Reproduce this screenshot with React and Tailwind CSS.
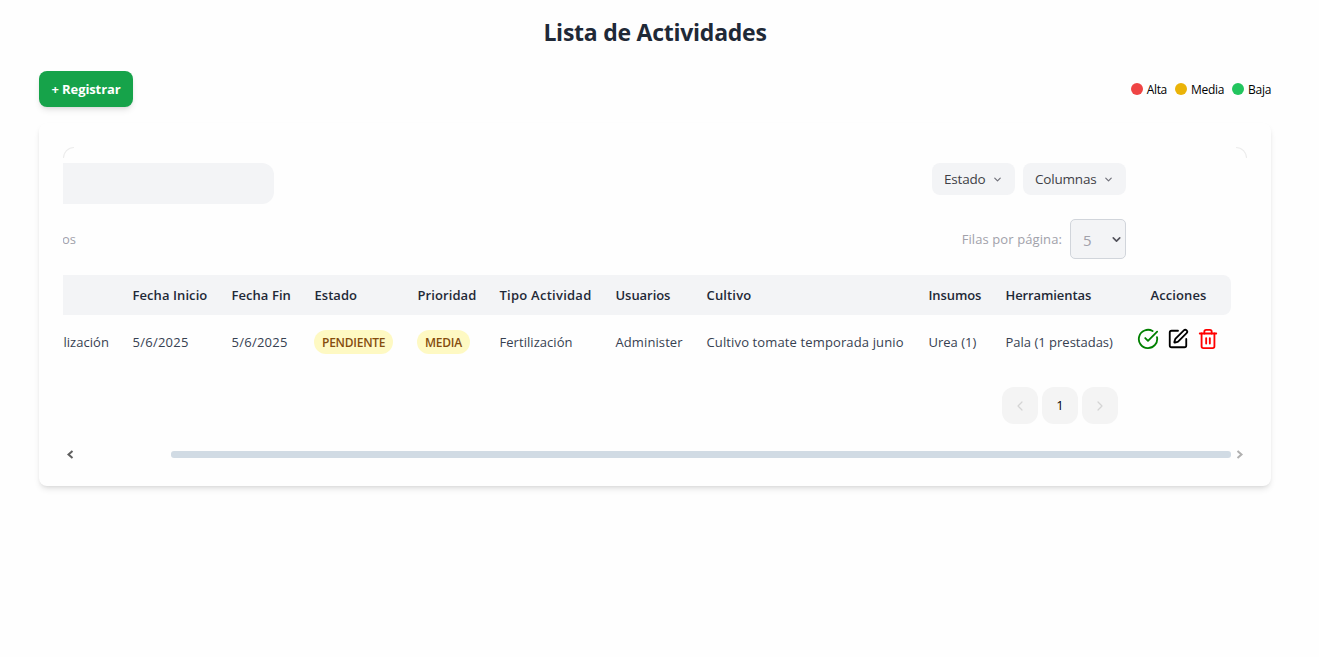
import React from "react";
import { ChevronDown, ChevronLeft, ChevronRight, CircleCheckBig, SquarePen, Trash2 } from "lucide-react";

const COLS =
  "grid grid-cols-[57px_99px_83px_103px_82px_116px_91px_222px_77px_133px_105px] items-center whitespace-nowrap";

const legend = [
  { label: "Alta", dot: "bg-[#ef4444]" },
  { label: "Media", dot: "bg-[#eab308]" },
  { label: "Baja", dot: "bg-[#22c55e]" },
];

const headers = [
  { label: "Fecha Inicio", track: "tracking-[0.08px]" },
  { label: "Fecha Fin", track: "tracking-[0.06px]" },
  { label: "Estado", track: "tracking-[0.03px]" },
  { label: "Prioridad", track: "tracking-[0.08px]" },
  { label: "Tipo Actividad", track: "tracking-[0.25px]" },
  { label: "Usuarios", track: "tracking-[-0.05px]" },
  { label: "Cultivo", track: "tracking-[0.15px]" },
  { label: "Insumos", track: "tracking-[-0.1px]" },
  { label: "Herramientas", track: "tracking-[-0.1px]" },
];

function Badge({ children }) {
  return (
    <span className="-ml-[0.5px] flex h-6 w-fit items-center rounded-full bg-[#fef9c3] px-2 pt-px text-[12px] font-semibold tracking-[-0.25px] text-[#854d0e]">
      {children}
    </span>
  );
}

function Cell({ children, className = "" }) {
  return <div className={`pl-[12.5px] ${className}`}>{children}</div>;
}

function FilterButton({ label, className }) {
  return (
    <button className={`flex h-8 items-center justify-between rounded-lg bg-[#f3f4f6] pl-3 pr-3 text-[13.5px] text-[#3f3f46] ${className}`}>
      {label}
      <ChevronDown size={11} strokeWidth={2.6} className="text-[#71717a]" />
    </button>
  );
}

export default function App() {
  return (
    <main className="flex h-[657px] w-full flex-col overflow-hidden bg-[#fefefe] pl-[39px] pr-12 font-['Open_Sans','Noto_Sans',sans-serif] text-black">
      <h1 className="mt-4 text-center text-[23px] font-bold leading-8 tracking-[-0.25px] text-[#1f2937]">
        Lista de Actividades
      </h1>

      <div className="mt-[23px] flex h-9 items-center justify-between">
        <button className="h-9 w-[94px] whitespace-nowrap rounded-lg bg-[#16a34a] pt-0.5 text-[13px] font-bold tracking-[-0.1px] text-white shadow-md">
          + Registrar
        </button>
        <div className="flex gap-2 text-[12px]">
          {legend.map((l) => (
            <div key={l.label} className="flex items-center gap-1">
              <span className={`size-3 rounded-full ${l.dot}`} />
              <span className="pt-0.5 tracking-[-0.3px]">{l.label}</span>
            </div>
          ))}
        </div>
      </div>

      <section className="mt-4 h-[363px] rounded-lg bg-[#fefefe] p-6 shadow-md">
        <div className="flex flex-col">
          <div className="flex h-4 justify-between">
            <div className="size-[11px] rounded-tl-[11px] border-l border-t border-[#ececec]" />
            <div className="size-[11px] rounded-tr-[11px] border-r border-t border-[#ececec]" />
          </div>
          <div className="flex h-10 items-start justify-between pr-[121px]">
            <div className="h-[41px] w-[211px] shrink-0 rounded-r-xl bg-[#f3f4f6]" />
            <div className="flex gap-2">
              <FilterButton label="Estado" className="w-[83px] tracking-[-0.2px]" />
              <FilterButton label="Columnas" className="w-[103px] tracking-[-0.2px]" />
            </div>
          </div>

          <div className="mt-4 flex h-10 items-center justify-between pr-[121px] text-[13px] text-[#a1a1aa]">
            <div className="flex w-[13px] justify-end overflow-hidden whitespace-nowrap pt-0.5">registrados</div>
            <div className="flex items-center gap-2">
              <span className="pt-0.5 tracking-[0.1px]">Filas por página:</span>
              <div className="flex h-10 w-14 items-center justify-between rounded-[5px] border border-[#d1d5db] bg-[#f3f4f6] pl-3 pr-0.5 text-[15px]">
                <span className="pt-0.5">5</span>
                <ChevronDown size={13} strokeWidth={3} className="text-[#52525b]" />
              </div>
            </div>
          </div>

          <div className={`${COLS} mt-4 h-10 w-[1168px] rounded-r-lg bg-[#f3f4f6] pt-0.5 text-[13px] font-semibold text-[#1f2937]`}>
            <div />
            {headers.map((h) => (
              <Cell key={h.label} className={h.track}>{h.label}</Cell>
            ))}
            <div className="text-center tracking-[0.1px]">Acciones</div>
          </div>

          <div className={`${COLS} h-[54px] w-[1168px] text-[13px] text-[#374151]`}>
            <div className="flex w-[46px] justify-end overflow-hidden pt-0.5 tracking-[0.05px]">Fertilización</div>
            <Cell className="pt-0.5 tracking-[0.25px]">5/6/2025</Cell>
            <Cell className="pt-0.5 tracking-[0.25px]">5/6/2025</Cell>
            <Cell><Badge>PENDIENTE</Badge></Cell>
            <Cell><Badge>MEDIA</Badge></Cell>
            <Cell className="pt-0.5 tracking-[0.05px]">Fertilización</Cell>
            <Cell className="pt-0.5 tracking-[0.1px]">Administer</Cell>
            <Cell className="pt-0.5 tracking-[0.13px]">Cultivo tomate temporada junio</Cell>
            <Cell className="pt-0.5">Urea (1)</Cell>
            <Cell className="pt-0.5">Pala (1 prestadas)</Cell>
            <div className="flex items-center gap-2 pb-[6px] pl-[11px]">
              <CircleCheckBig size={22} className="text-[#008000]" />
              <SquarePen size={22} className="text-black" />
              <Trash2 size={22} className="text-[#ff0000]" />
            </div>
          </div>

          <div className="mt-[18px] flex gap-1 pl-[939px]">
            <button className="flex h-[37px] w-9 items-center justify-center rounded-xl bg-[#f4f4f4] text-[#d4d4d4]">
              <ChevronLeft size={16} strokeWidth={1.8} />
            </button>
            <button className="h-[37px] w-9 rounded-xl bg-[#f4f4f4] text-[13px]">1</button>
            <button className="flex h-[37px] w-9 items-center justify-center rounded-xl bg-[#f4f4f4] text-[#d4d4d4]">
              <ChevronRight size={16} strokeWidth={1.8} />
            </button>
          </div>

          <div className="mt-[22px] flex h-4 items-center">
            <svg width="15" height="16" viewBox="0 0 15 16" fill="none" stroke="#5f5f5f" strokeWidth="2">
              <path d="M9.5 5L5.5 8.5L9.5 12" />
            </svg>
            <div className="ml-[93px] mt-px h-[7px] w-[1060px] rounded-[3px] bg-[#d1dbe4]" />
            <svg width="16" height="16" viewBox="0 0 16 16" fill="none" stroke="#b0b0b0" strokeWidth="2">
              <path d="M6.5 5L10.5 8.5L6.5 12" />
            </svg>
          </div>
        </div>
      </section>
    </main>
  );
}
